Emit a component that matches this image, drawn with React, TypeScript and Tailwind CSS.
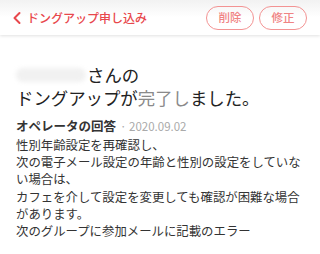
import React from "react";

export default function App() {
  const font = { fontFamily: '"Noto Sans CJK JP", "Noto Sans", sans-serif' };
  return (
    <div className="w-[320px] h-[254px] bg-white overflow-hidden" style={font}>
      <div className="relative h-[35px] flex items-center justify-between pl-[12px] pr-[13px] shadow-[0_1px_3px_rgba(0,0,0,0.12)] bg-gradient-to-b from-[#f2f2f2] via-white to-white">
        <div className="flex items-center text-[#e8474c]">
          <svg width="10" height="14" viewBox="0 0 10 14" className="mr-[5px]">
            <polyline points="7.5,2 2.5,7 7.5,12" fill="none" stroke="#e8474c" strokeWidth="2" strokeLinecap="round" strokeLinejoin="round" />
          </svg>
          <span className="text-[12px] font-medium leading-none">ドングアップ申し込み</span>
        </div>
        <div className="flex gap-[5px]">
          <button className="w-[48px] h-[24px] rounded-full border-[1.5px] border-[#f39393] text-[#f08383] text-[11.5px] font-medium leading-none flex items-center justify-center">削除</button>
          <button className="w-[48px] h-[24px] rounded-full border-[1.5px] border-[#f39393] text-[#f08383] text-[11.5px] font-medium leading-none flex items-center justify-center">修正</button>
        </div>
      </div>
      <div className="px-[16px] pt-[28px]">
        <div className="text-[17.4px] leading-[23px] text-[#222]">
          <div className="flex items-center">
            <span className="inline-block w-[70px] h-[14px] rounded-full bg-[#f1f1f1] blur-[2px] mr-[1px]" />
            <span>さんの</span>
          </div>
          <div>
            ドングアップが<span className="text-[#8a8a8a]">完了し</span>ました。
          </div>
        </div>
        <div className="mt-[8px] flex items-baseline text-[12.5px] leading-[17px]">
          <span className="font-bold text-[#333]">オペレータの回答</span>
          <span className="text-[#aaa] text-[11.5px] ml-[4px]">· 2020.09.02</span>
        </div>
        <div className="mt-[2px] text-[12.4px] leading-[17.2px] text-[#333]">
          <div>性別年齢設定を再確認し、</div>
          <div>次の電子メール設定の年齢と性別の設定をしていない場合は、</div>
          <div>カフェを介して設定を変更しても確認が困難な場合があります。</div>
          <div>次のグループに参加メールに記載のエラー</div>
        </div>
        <div className="mt-[19px] h-px bg-[#e6e6e6]" />
      </div>
    </div>
  );
}
